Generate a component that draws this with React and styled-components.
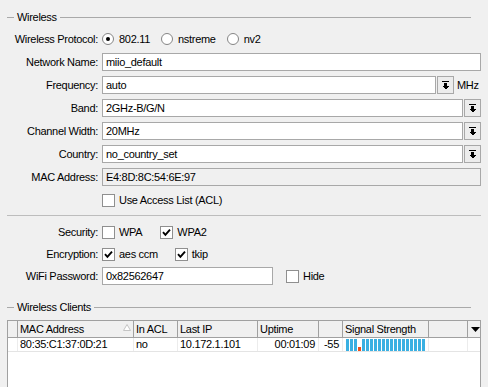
import React from "react";
import styled, { createGlobalStyle } from "styled-components";

const GlobalStyle = createGlobalStyle`
  html, body { margin: 0; padding: 0; background: #f0f0f0; }
  body {
    font-family: "Liberation Sans", Arial, sans-serif;
    font-size: 11px;
    letter-spacing: -0.3px;
    color: #000;
  }
  * { box-sizing: border-box; }
`;

const Page = styled.div`
  width: 488px;
  height: 387px;
  overflow: hidden;
  padding: 10px 7px 0 7px;
`;

const SectionHeader = styled.div`
  display: flex;
  align-items: center;
  gap: 3px;
  height: 14px;
  margin-right: 10px;
  margin-top: ${(p) => p.$mt || 0}px;
  white-space: nowrap;
  &::before, &::after {
    content: "";
    height: 1px;
    background: #a9a9a9;
  }
  &::before { width: 7px; }
  &::after { flex: 1; }
`;

const Form = styled.div`
  display: grid;
  grid-template-columns: 91px 1fr;
  column-gap: 4px;
  row-gap: ${(p) => p.$rowGap}px;
  margin-top: ${(p) => p.$mt}px;
`;

const Label = styled.div`
  height: 18px;
  line-height: 18px;
  text-align: right;
  white-space: nowrap;
`;

const Control = styled.div`
  display: flex;
  align-items: center;
  height: 18px;
  gap: ${(p) => p.$gap || 0}px;
`;

const Field = styled.div`
  flex: ${(p) => (p.$width ? "none" : 1)};
  width: ${(p) => (p.$width ? `${p.$width}px` : "auto")};
  height: 18px;
  line-height: 16px;
  padding: 0 3px;
  border: 1px solid #a8a8a8;
  background: ${(p) => (p.$readonly ? "#f0f0f0" : "#fff")};
  white-space: nowrap;
  overflow: hidden;
`;

const DropButton = styled.div`
  width: 17px;
  height: 18px;
  margin-left: 1px;
  border: 1px solid #a8a8a8;
  background: #ececec;
  display: flex;
  align-items: center;
  justify-content: center;
`;

const Unit = styled.span`
  margin-left: 3px;
  width: 24px;
`;

const Separator = styled.div`
  height: 1px;
  background: #bdbdbd;
  margin-top: ${(p) => p.$mt}px;
`;

const Group = styled.div`
  display: flex;
  align-items: center;
  gap: ${(p) => p.$gap}px;
  height: 18px;
`;

const Item = styled.label`
  display: flex;
  align-items: center;
  gap: ${(p) => p.$gap || 4}px;
  white-space: nowrap;
`;

const Box = styled.span`
  width: 13px;
  height: 13px;
  border: 1px solid #8f8f8f;
  background: #fff;
  display: inline-flex;
  align-items: center;
  justify-content: center;
  flex: none;
`;

const Radio = styled.span`
  width: 12px;
  height: 12px;
  border-radius: 50%;
  border: 1px solid #858585;
  background: #fff;
  display: inline-flex;
  align-items: center;
  justify-content: center;
  flex: none;
  &::after {
    content: "";
    width: 4px;
    height: 4px;
    border-radius: 50%;
    background: ${(p) => (p.$checked ? "#000" : "transparent")};
  }
`;

const Table = styled.div`
  margin-top: 6px;
  height: 80px;
  border: 1px solid #a0a0a0;
  background: #fff;
`;

const Row = styled.div`
  display: grid;
  grid-template-columns: 10px 116px 44px 80px 61px 24px 86px 39px 13px;
  height: ${(p) => (p.$head ? 17 : 14)}px;
  background: ${(p) => (p.$head ? "#f0f0f0" : "#fff")};
  border-bottom: 1px solid ${(p) => (p.$head ? "#a0a0a0" : "#e4e4e4")};
`;

const HeadCell = styled.div`
  position: relative;
  border-right: ${(p) => (p.$last ? "none" : "1px solid #a0a0a0")};
  padding-left: 2px;
  line-height: 16px;
  white-space: nowrap;
  overflow: hidden;
  display: flex;
  align-items: center;
  justify-content: ${(p) => (p.$center ? "center" : "flex-start")};
`;

const Cell = styled.div`
  border-right: ${(p) => (p.$last ? "none" : "1px solid #ececec")};
  padding: 0 ${(p) => (p.$right ? "3px" : "0")} 0 ${(p) => (p.$right ? "0" : "2px")};
  line-height: 13px;
  text-align: ${(p) => (p.$right ? "right" : "left")};
  white-space: nowrap;
  overflow: hidden;
`;

const SortMark = styled.svg`
  position: absolute;
  right: 2px;
  top: 3px;
`;

const Bars = styled.div`
  display: flex;
  align-items: flex-end;
  gap: 1px;
  height: 12px;
  margin: 1px 0 0 1px;
`;

const Bar = styled.span`
  width: 3px;
  height: ${(p) => (p.$low ? 4 : 12)}px;
  background: ${(p) => (p.$low ? "#f0501a" : "#3ab0e2")};
`;

const DropIcon = () => (
  <svg width="7" height="9" viewBox="0 0 7 9" shapeRendering="crispEdges">
    <rect x="0" y="0" width="7" height="1" fill="#000" />
    <rect x="2" y="2" width="3" height="3" fill="#000" />
    <polygon points="0,5 7,5 3.5,8.5" fill="#000" />
  </svg>
);

const Check = () => (
  <svg width="9" height="9" viewBox="0 0 9 9">
    <polyline points="1,4.2 3.4,6.8 8,1.6" fill="none" stroke="#000" strokeWidth="1.9" />
  </svg>
);

const CheckItem = ({ checked, children }) => (
  <Item>
    <Box>{checked && <Check />}</Box>
    {children}
  </Item>
);

const RadioItem = ({ checked, children }) => (
  <Item $gap={5}>
    <Radio $checked={checked} />
    {children}
  </Item>
);

const SelectField = ({ value }) => (
  <Control>
    <Field>{value}</Field>
    <DropButton>
      <DropIcon />
    </DropButton>
  </Control>
);

const signal = Array.from({ length: 20 }, (_, i) => i === 3);

export default function App() {
  return (
    <>
      <GlobalStyle />
      <Page>
        <SectionHeader>Wireless</SectionHeader>
        <Form $rowGap={5} $mt={6}>
          <Label>Wireless Protocol:</Label>
          <Group $gap={11}>
            <RadioItem checked>802.11</RadioItem>
            <RadioItem>nstreme</RadioItem>
            <RadioItem>nv2</RadioItem>
          </Group>

          <Label>Network Name:</Label>
          <Control>
            <Field>miio_default</Field>
          </Control>

          <Label>Frequency:</Label>
          <Control>
            <Field>auto</Field>
            <DropButton>
              <DropIcon />
            </DropButton>
            <Unit>MHz</Unit>
          </Control>

          <Label>Band:</Label>
          <SelectField value="2GHz-B/G/N" />

          <Label>Channel Width:</Label>
          <SelectField value="20MHz" />

          <Label>Country:</Label>
          <SelectField value="no_country_set" />

          <Label>MAC Address:</Label>
          <Control>
            <Field $readonly>E4:8D:8C:54:6E:97</Field>
          </Control>

          <Label />
          <Group $gap={0}>
            <CheckItem>Use Access List (ACL)</CheckItem>
          </Group>
        </Form>

        <Separator $mt={6} />

        <Form $rowGap={4} $mt={7}>
          <Label>Security:</Label>
          <Group $gap={18}>
            <CheckItem>WPA</CheckItem>
            <CheckItem checked>WPA2</CheckItem>
          </Group>

          <Label>Encryption:</Label>
          <Group $gap={17}>
            <CheckItem checked>aes ccm</CheckItem>
            <CheckItem checked>tkip</CheckItem>
          </Group>

          <Label>WiFi Password:</Label>
          <Control $gap={13}>
            <Field $width={171}>0x82562647</Field>
            <CheckItem>Hide</CheckItem>
          </Control>
        </Form>

        <SectionHeader $mt={15}>Wireless Clients</SectionHeader>

        <Table>
          <Row $head>
            <HeadCell />
            <HeadCell>
              MAC Address
              <SortMark width="8" height="7" viewBox="0 0 8 7">
                <polygon points="4,0.5 7.5,6.5 0.5,6.5" fill="#fff" stroke="#c4c4c4" strokeWidth="1" />
              </SortMark>
            </HeadCell>
            <HeadCell>In ACL</HeadCell>
            <HeadCell>Last IP</HeadCell>
            <HeadCell>Uptime</HeadCell>
            <HeadCell />
            <HeadCell>Signal Strength</HeadCell>
            <HeadCell />
            <HeadCell $last $center>
              <svg width="9" height="5" viewBox="0 0 9 5">
                <polygon points="0,0 9,0 4.5,5" fill="#000" />
              </svg>
            </HeadCell>
          </Row>
          <Row>
            <Cell />
            <Cell>80:35:C1:37:0D:21</Cell>
            <Cell>no</Cell>
            <Cell>10.172.1.101</Cell>
            <Cell $right>00:01:09</Cell>
            <Cell $right>-55</Cell>
            <Cell>
              <Bars>
                {signal.map((low, i) => (
                  <Bar key={i} $low={low} />
                ))}
              </Bars>
            </Cell>
            <Cell />
            <Cell $last />
          </Row>
        </Table>
      </Page>
    </>
  );
}
